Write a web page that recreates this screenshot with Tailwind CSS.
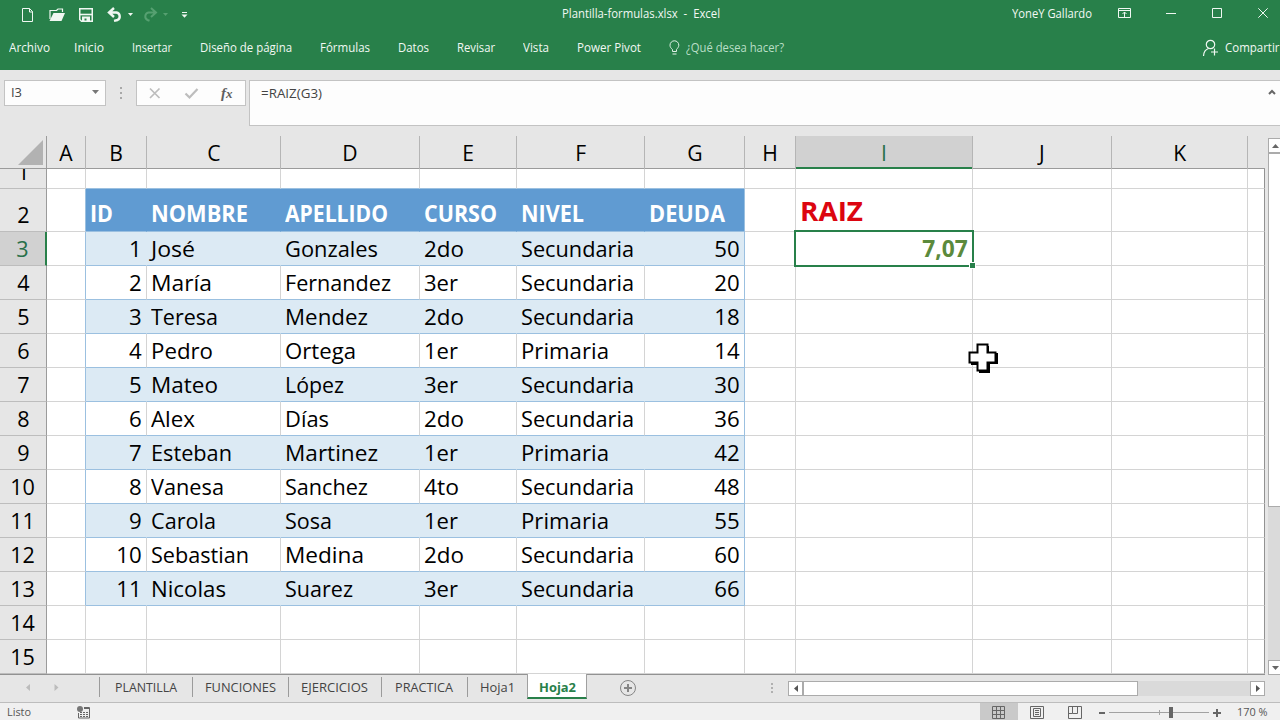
<!DOCTYPE html>
<html lang="es">
<head>
<meta charset="utf-8">
<title>Plantilla-formulas.xlsx - Excel</title>
<script src="https://cdn.jsdelivr.net/npm/@tailwindcss/browser@4"></script>
</head>
<body class="relative flex h-[720px] w-[1280px] flex-col overflow-hidden bg-[#e6e6e6] font-['Open_Sans',sans-serif] text-[12px] text-[#444]">

<!-- Title bar and ribbon tabs -->
<header class="flex h-[70px] shrink-0 flex-col bg-[#28804a] text-[#f2f8f4]">
  <div class="flex h-[28px] items-center">
    <svg class="h-[28px] w-[200px] shrink-0" viewBox="0 0 200 28" fill="none" stroke="#f0f7f2">
      <path d="M22.5 8.5h7l3 3v10h-10zM29.5 8.5v3.5h3.500"/>
      <path d="M50 19V10.500h6.500l1.500-1.500h4.500v3" stroke-width="1.200"/>
      <path d="M49.500 21l4-8H65l-3.500 8z" fill="#f0f7f2" stroke="none"/>
      <path d="M79.750 8.750h12.500v12.500H81.500l-1.750-1.750z" stroke-width="1.500"/>
      <path d="M80 14.500h12" stroke-width="1.600"/>
      <path d="M82 21v-4.500h8V21h-3.500v-2.500H84.500V21z" fill="#f0f7f2" stroke="none"/>
      <path d="M114 8l-5 4.500 5 4.500M109.500 12.500h7a4 4 0 0 1 1 7.500l-3.500 .8" stroke-width="2.400"/>
      <path d="M128 13h5l-2.500 3z" fill="#f0f7f2" stroke="none"/>
      <g stroke="#56a071"><path d="M151 8l5 4.500-5 4.500M155.500 12.500h-7a4 4 0 0 0-1 7.500l2 .8" stroke-width="2"/><path d="M163 13h5l-2.500 3z" fill="#56a071" stroke="none"/></g>
      <path d="M182 12.500h5"/><path d="M181.500 14.500h6l-3 3.200z" fill="#f0f7f2" stroke="none"/>
    </svg>
    <div class="ml-[362px] w-[158px] shrink-0 origin-left whitespace-pre" data-w="158">Plantilla-formulas.xlsx  -  Excel</div>
    <div class="ml-[292px] w-[80px] shrink-0 origin-left whitespace-nowrap" data-w="80">YoneY Gallardo</div>
    <svg class="h-[28px] w-[188px] shrink-0" viewBox="0 0 188 28" fill="none" stroke="#f0f7f2">
      <path d="M26.500 8.500h12v9h-12zM26.500 10.500h12M32.500 17v-5M30.500 14l2-2 2 2"/>
      <path d="M74 13.500h10M120.500 8.500h9v9h-9zM166.300 8.300l9.400 9.400M175.700 8.300l-9.400 9.400"/>
    </svg>
  </div>
  <nav class="flex h-[40px] items-center whitespace-nowrap pl-[9px]">
    <span class="w-[41px] shrink-0 origin-left" data-w="41">Archivo</span>
    <span class="ml-[24px] w-[30px] shrink-0 origin-left" data-w="30">Inicio</span>
    <span class="ml-[28px] w-[39px] shrink-0 origin-left" data-w="40">Insertar</span>
    <span class="ml-[29px] w-[91px] shrink-0 origin-left" data-w="92">Diseño de página</span>
    <span class="ml-[29px] w-[49px] shrink-0 origin-left" data-w="50">Fórmulas</span>
    <span class="ml-[29px] w-[30px] shrink-0 origin-left" data-w="31">Datos</span>
    <span class="ml-[29px] w-[37px] shrink-0 origin-left" data-w="38">Revisar</span>
    <span class="ml-[29px] w-[25px] shrink-0 origin-left" data-w="26">Vista</span>
    <span class="ml-[29px] w-[63px] shrink-0 origin-left" data-w="64">Power Pivot</span>
    <svg class="ml-[28px] h-[16px] w-[13px] shrink-0" viewBox="0 0 13 16" fill="none" stroke="#e0f0e6"><path d="M4.500 11.500v-2C3 8.300 2 7 2 5.200a4.400 4.400 0 0 1 8.800 0C10.800 7 9.500 8.300 8.500 9.500v2zM4.500 14h4"/></svg>
    <span class="ml-[5px] w-[97px] shrink-0 origin-left text-[#b9dfc7]" data-w="98">¿Qué desea hacer?</span>
    <svg class="ml-[419px] h-[18px] w-[18px] shrink-0" viewBox="0 0 18 18" fill="none" stroke="#f0f7f2" stroke-width="1.200"><circle cx="8.500" cy="5.500" r="4.200"/><path d="M1.500 17c.2-4 2-6.500 5-7.500M12.500 9.500v7M9 13h7"/></svg>
    <span class="ml-[5px] w-[54px] shrink-0 origin-left" data-w="54.500">Compartir</span>
  </nav>
</header>

<!-- Formula bar -->
<section class="flex h-[66px] shrink-0 items-start pl-[4px] pt-[10px]">
  <div class="flex h-[26px] w-[102px] items-center justify-between border border-[#c3c3c3] bg-[#fdfdfd] pl-[6px] pr-[6px]">
    <span class="w-[11px] origin-left whitespace-nowrap" data-w="11">I3</span>
    <svg class="mb-[2px] h-[4px] w-[7px]" viewBox="0 0 7 4"><path d="M0 0h7L3.500 4z" fill="#777"/></svg>
  </div>
  <div class="ml-[14px] flex h-[26px] w-[2px] flex-col items-center justify-center gap-[3px]">
    <i class="size-[2px] bg-[#a8a8a8]"></i><i class="size-[2px] bg-[#a8a8a8]"></i><i class="size-[2px] bg-[#a8a8a8]"></i>
  </div>
  <div class="ml-[14px] flex h-[26px] w-[110px] items-center border border-[#c3c3c3] bg-[#fdfdfd]">
    <svg class="h-[24px] w-[72px] shrink-0" viewBox="0 0 72 24" fill="none" stroke="#bdbdbd" stroke-width="1.700"><path d="M13 7.500l9.500 9.500M22.500 7.500L13 17"/><path d="M48.500 12.500l4 4 8-8.500" stroke-width="2.200"/></svg>
    <span class="ml-[12px] font-['Liberation_Serif',serif] text-[15px] font-bold italic leading-[20px] text-[#606060]">f<span class="text-[13px]">x</span></span>
  </div>
  <div class="ml-[3px] flex h-[46px] flex-1 items-start justify-between border border-r-0 border-[#c3c3c3] bg-[#fdfdfd] pl-[11px] pr-[4px] pt-[4px]">
    <span class="w-[61px] origin-left whitespace-nowrap" data-w="61">=RAIZ(G3)</span>
    <svg class="mt-[4px] h-[6px] w-[8px]" viewBox="0 0 8 6" fill="none" stroke="#666" stroke-width="2"><path d="M1 5l3-3 3 3"/></svg>
  </div>
</section>

<!-- Worksheet and vertical scrollbar -->
<section class="flex h-[539px] shrink-0">
  <main id="sheet" class="flex w-[1265px] shrink-0 flex-col overflow-hidden border-b border-[#929292] text-black"></main>
  <aside class="ml-[3px] flex w-[12px] shrink-0 flex-col overflow-hidden pt-[2px]">
    <div class="flex h-[15px] shrink-0 items-center justify-center border border-r-0 border-[#ababab] bg-white pl-px"><svg class="h-[4px] w-[7px]" viewBox="0 0 7 4"><path d="M0 4h7L3.500 0z" fill="#666"/></svg></div>
    <div class="h-[354px] shrink-0 border border-r-0 border-[#ababab] bg-white"></div>
    <div class="flex-1 bg-[#dadada]"></div>
    <div class="flex h-[15px] shrink-0 items-center justify-center border border-r-0 border-[#ababab] bg-white pl-px"><svg class="h-[4px] w-[7px]" viewBox="0 0 7 4"><path d="M0 0h7L3.500 4z" fill="#666"/></svg></div>
  </aside>
</section>

<!-- Sheet tabs and horizontal scrollbar -->
<section class="flex h-[28px] shrink-0 items-start whitespace-nowrap border-b border-[#bdbdbd]">
  <svg class="h-[27px] w-[99px] shrink-0" viewBox="0 0 99 27" fill="#bcbcbc"><path d="M30 9v7l-4-3.500zM54.500 9v7l4-3.500z"/></svg>
  <div class="flex h-[25px] items-center">
    <i class="mb-[1px] h-[20px] w-px bg-[#9b9b9b]"></i><span class="ml-[15px] w-[61px] origin-left" data-w="62">PLANTILLA</span>
    <i class="mb-[1px] ml-[16px] h-[20px] w-px bg-[#9b9b9b]"></i><span class="ml-[12px] w-[70px] origin-left" data-w="71">FUNCIONES</span>
    <i class="mb-[1px] ml-[13px] h-[20px] w-px bg-[#9b9b9b]"></i><span class="ml-[12px] w-[66px] origin-left" data-w="67">EJERCICIOS</span>
    <i class="mb-[1px] ml-[14px] h-[20px] w-px bg-[#9b9b9b]"></i><span class="ml-[13px] w-[57px] origin-left" data-w="58">PRACTICA</span>
    <i class="mb-[1px] ml-[15px] h-[20px] w-px bg-[#9b9b9b]"></i><span class="ml-[12px] w-[33px] origin-left" data-w="35">Hoja1</span>
  </div>
  <div class="-mt-px ml-[14px] flex h-[25px] w-[60px] items-center border-x border-b-2 border-x-[#a0a0a0] border-b-[#28804a] bg-white pl-[11px] pt-[4px] font-bold text-[#28804a]"><span class="w-[36px] origin-left" data-w="37" data-font="bold 12px">Hoja2</span></div>
  <svg class="ml-[33px] h-[27px] w-[17px]" viewBox="0 0 17 27" fill="none" stroke="#858585"><circle cx="8" cy="13" r="7.500"/><path d="M4 13h8M8 9v8" stroke-width="2"/></svg>
  <div class="ml-[134px] flex h-[26px] w-[2px] flex-col items-center justify-center gap-[2px]">
    <i class="size-[2px] bg-[#b0b0b0]"></i><i class="size-[2px] bg-[#b0b0b0]"></i><i class="size-[2px] bg-[#b0b0b0]"></i>
  </div>
  <div class="ml-[15px] mt-[6px] flex h-[15px] w-[477px] bg-[#dadada]">
    <div class="flex w-[15px] items-center justify-center border border-[#ababab] bg-white"><svg class="h-[7px] w-[4px]" viewBox="0 0 4 7"><path d="M4 0v7L0 3.500z" fill="#555"/></svg></div>
    <div class="w-[335px] border border-[#ababab] bg-white"></div>
    <div class="flex-1"></div>
    <div class="flex w-[15px] items-center justify-center border border-[#ababab] bg-white"><svg class="h-[7px] w-[4px]" viewBox="0 0 4 7"><path d="M0 0v7l4-3.500z" fill="#555"/></svg></div>
  </div>
</section>

<!-- Status bar -->
<footer class="flex h-[17px] shrink-0 items-center whitespace-nowrap bg-[#f0f0f0] pl-[7px] text-[11px] text-[#555]">
  <span class="mt-[2px] w-[24px] origin-left" data-w="24" data-font="11px">Listo</span>
  <svg class="ml-[46px] h-[17px] w-[14px] shrink-0" viewBox="0 0 14 17" fill="none" stroke="#666"><circle cx="3" cy="6" r="3" fill="#777" stroke="none"/><path d="M7 4.500h5.500v10.500h-11v-5M7 5.500h6"/><path d="M3 9.500h8M3 11.500h8M3 13.500h8" stroke-dasharray="2 1"/></svg>
  <div class="ml-[889px] flex h-[17px] w-[38px] items-center justify-center bg-[#c9c9c9]"><svg class="h-[17px] w-[38px]" viewBox="0 0 38 17" fill="none" stroke="#666"><path d="M12.500 3.500h12v12h-12zM12.500 7.500h12M12.500 11.500h12M16.500 3.500v12M20.500 3.500v12"/></svg></div>
  <svg class="h-[17px] w-[219px] shrink-0" viewBox="0 0 219 17" fill="none" stroke="#666">
    <path d="M12.500 3.500h13v12h-13zM15.500 5.500h7v8h-7zM17 7.500h4M17 9.500h4M17 11.500h4"/>
    <path d="M50.500 3.500h13v12h-13zM54.500 3.500v7h-4M59.500 3.500v7h-5"/>
    <path d="M81 10h6M195 10h8M199 6v8" stroke-width="2"/>
    <path d="M91 9.500h100M141.500 7v5" stroke="#a2a2a2"/><path d="M151 4h4v11h-4z" fill="#666" stroke="none"/>
  </svg>
  <span class="mt-[2px] w-[30px] origin-left" data-w="30.500" data-font="11px">170 %</span>
</footer>

<!-- Mouse pointer -->
<svg class="absolute left-[968px] top-[343px] h-[32px] w-[32px]" viewBox="0 0 32 32">
  <path d="M11 3h10v7h9v11h-8v9H11v-8H3V12h8z" fill="#000"/>
  <path d="M9.500 1.500h10v8h8v10h-8v8h-10v-8h-8v-10h8z" fill="#fff" stroke="#000" stroke-width="2"/>
</svg>

<script>
const cols = [
  ['A','w-[39px]'],['B','w-[61px]'],['C','w-[134px]'],['D','w-[139px]'],['E','w-[97px]'],['F','w-[128px]'],
  ['G','w-[100px]'],['H','w-[51px]'],['I','w-[177px]'],['J','w-[139px]'],['K','w-[136px]'],['','w-[17px]']
];
const titles = [['ID',23],['NOMBRE',97],['APELLIDO',103],['CURSO',73],['NIVEL',63],['DEUDA',76]];
const data = [
  [1,['José',44],['Gonzales',93],['2do',40],['Secundaria',113],50],
  [2,['María',61],['Fernandez',106],['3er',34],['Secundaria',113],20],
  [3,['Teresa',67],['Mendez',83],['2do',40],['Secundaria',113],18],
  [4,['Pedro',62],['Ortega',71],['1er',34],['Primaria',88],14],
  [5,['Mateo',67],['López',59],['3er',34],['Secundaria',113],30],
  [6,['Alex',44],['Días',44],['2do',40],['Secundaria',113],36],
  [7,['Esteban',81],['Martinez',93],['1er',34],['Primaria',88],42],
  [8,['Vanesa',73],['Sanchez',83],['4to',35],['Secundaria',113],48],
  [9,['Carola',65],['Sosa',47],['1er',34],['Primaria',88],55],
  [10,['Sebastian',98],['Medina',79],['2do',40],['Secundaria',113],60],
  [11,['Nicolas',75],['Suarez',68],['3er',34],['Secundaria',113],66]
];

let html = '<div class="flex h-[33px] shrink-0"><div class="flex w-[47px] shrink-0 items-end justify-end border-b border-r border-[#9b9b9b] pb-[3px] pr-[3px]"><svg class="h-[25px] w-[25px]" viewBox="0 0 25 25"><path d="M25 0v25H0z" fill="#b2b2b2"/></svg></div>';
cols.forEach(([name, w]) => {
  const on = name === 'I';
  const last = name === '';
  html += `<div class="${w} flex shrink-0 flex-col ${on ? 'border-b-2 border-[#28804a] bg-[#d1d1d1] text-[#28704a]' : 'border-b border-[#9b9b9b]'}"><div class="${last ? '' : 'border-r border-r-[#b5b5b5]'} flex-1 text-center text-[22px] leading-[33px]"><span class="inline-block scale-x-[.96]">${name}</span></div></div>`;
});
html += '</div>';

for (let r = 1; r <= 15; r++) {
  const h = r === 1 ? 'h-[20px]' : r === 2 ? 'h-[43px]' : 'h-[34px]';
  const sel = r === 3;
  html += `<div class="${h} flex shrink-0 text-[22.4px] leading-[33px]">`;
  html += `<div class="flex w-[47px] shrink-0 items-end justify-center overflow-hidden border-b border-b-[#bdbdbd] ${sel ? 'border-r-2 border-r-[#28804a] bg-[#d1d1d1] text-[#28704a]' : 'border-r border-r-[#9b9b9b]'} text-[22px]"><span class="inline-block scale-x-[.98]">${r}</span></div>`;
  cols.forEach(([name, w], i) => {
    const inTable = r >= 2 && r <= 13 && i >= 1 && i <= 6;
    const band = inTable && r > 2 && r % 2 === 1;
    let bg = 'bg-white', right = 'border-r-[#d4d4d4]', bottom = 'border-b-[#d4d4d4]', body = '', align = 'justify-start';
    if (inTable) {
      bottom = 'border-b-[#9bc0e0]';
      if (r === 2) { bg = 'bg-[#609bd2]'; right = 'border-r-[#609bd2]'; }
      else if (band) { bg = 'bg-[#dceaf4]'; right = 'border-r-[#dceaf4]'; }
      if (i === 6) right = 'border-r-[#9bc0e0]';
      if (r === 2) {
        body = `<span class="inline-block origin-left font-bold text-white" data-w="${titles[i - 1][1]}" data-font="bold 22.4px">${titles[i - 1][0]}</span>`;
      } else {
        const v = data[r - 3][i - 1];
        if (Array.isArray(v)) body = `<span class="inline-block origin-left" data-w="${v[1]}" data-font="22.4px">${v[0]}</span>`;
        else { align = 'justify-end'; body = `<span class="inline-block origin-right" data-w="${String(v).length * 12.7}" data-font="22.4px">${v}</span>`; }
      }
    }
    if (r === 1 && i >= 1 && i <= 6) bottom = 'border-b-[#9bc0e0]';
    if (i === 0 && r >= 2 && r <= 13) right = 'border-r-[#9bc0e0]';
    if (name === '') right = 'border-r-[#929292]';
    if (name === 'I' && r === 2) body = '<span class="mb-[3px] inline-block origin-left text-[27.500px] font-bold text-[#dc0510]" data-w="63" data-font="bold 27.5px">RAIZ</span>';
    if (name === 'I' && r === 3) {
      align = 'justify-end';
      body = '<span class="inline-block origin-right font-bold text-[#5b8a3c]" data-w="45.500" data-font="bold 22.4px">7,07</span><i class="absolute -left-[2px] -top-[2px] h-[37px] w-[180px] border-2 border-[#28804a]"></i><i class="absolute -right-[4px] -bottom-[4px] size-[7px] border border-white bg-[#28804a]"></i>';
    }
    const layer = name === 'I' && r === 3 ? 'relative z-10' : '';
    html += `<div class="${w} ${bg} ${right} ${bottom} ${align} ${layer} flex shrink-0 items-end whitespace-nowrap border-b border-r pl-[4px] pr-[4px] ${r === 2 ? 'pb-px' : ''}">${body}</div>`;
  });
  html += '</div>';
}
document.getElementById('sheet').innerHTML = html;

// Condense each label to the width of its slot; data-font holds weight and size (12px unless set).
const ctx = document.createElement('canvas').getContext('2d');
document.querySelectorAll('[data-w]').forEach(el => {
  ctx.font = `${el.dataset.font || '12px'} "Open Sans"`;
  el.style.transform = `scaleX(${+el.dataset.w / ctx.measureText(el.textContent).width})`;
});
</script>
</body>
</html>
